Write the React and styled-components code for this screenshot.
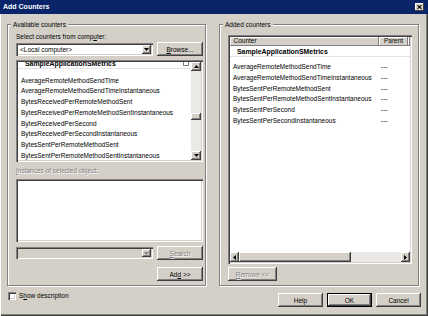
import React from 'react';
import styled, { createGlobalStyle, css } from 'styled-components';

const GlobalStyle = createGlobalStyle`
  html, body { margin: 0; padding: 0; background: #d4d0c8; }
  body { font-family: "Liberation Sans", Arial, sans-serif; font-size: 6.5px; color: #000; }
  * { box-sizing: border-box; }
`;

const raised = css`
  box-shadow: inset -1px -1px 0 #404040, inset 1px 1px 0 #ffffff,
    inset -2px -2px 0 #808080, inset 2px 2px 0 #d4d0c8;
`;
const raisedThin = css`
  box-shadow: inset -1px -1px 0 #404040, inset 1px 1px 0 #ffffff;
`;
const sunken = css`
  box-shadow: inset 1px 1px 0 #808080, inset 2px 2px 0 #404040,
    inset -1px -1px 0 #ffffff, inset -2px -2px 0 #d4d0c8;
`;

const Window = styled.div`
  width: 428px;
  height: 316px;
  background: #d4d0c8;
  display: flex;
  flex-direction: column;
  overflow: hidden;
  box-shadow: inset 1px 0 0 #ffffff, inset -1px -1px 0 #404040, inset -2px -2px 0 #808080;
`;

const TitleBar = styled.div`
  height: 14px;
  flex: none;
  background: #0a246a;
  display: flex;
  align-items: center;
  justify-content: space-between;
  padding: 0 4px 0 3px;
`;

const Title = styled.span`
  color: #fff;
  font-weight: bold;
  font-size: 7px;
  line-height: 14px;
`;

const CloseButton = styled.div`
  width: 9px;
  height: 8px;
  background: #d4d0c8;
  ${raisedThin};
  display: flex;
  align-items: center;
  justify-content: center;
`;

const Body = styled.div`
  flex: 1;
  display: flex;
  flex-direction: column;
  padding: 6px 9px 0 7px;
`;

const Columns = styled.div`
  display: flex;
  gap: 13px;
`;

const Group = styled.fieldset`
  margin: 0;
  min-width: 0;
  width: ${(p) => p.$w}px;
  flex: none;
  border: 1px solid #808080;
  box-shadow: inset 1px 1px 0 #ffffff, 1px 1px 0 #ffffff;
  padding: 4px ${(p) => p.$pr}px 4px 8px;
  display: flex;
  flex-direction: column;
`;

const Legend = styled.legend`
  padding: 0 2px;
  margin-left: -5px;
  line-height: 9px;
  background: #d4d0c8;
`;

const Label = styled.div`
  line-height: 8px;
  height: 8px;
  margin-top: ${(p) => p.$mt || 0}px;
  color: ${(p) => (p.$disabled ? '#808080' : '#000')};
  text-shadow: ${(p) => (p.$disabled ? '0.7px 0.7px 0 #fff' : 'none')};
  white-space: nowrap;
`;

const Row = styled.div`
  display: flex;
  align-items: center;
  justify-content: ${(p) => p.$justify || 'space-between'};
  height: 14px;
  flex: none;
  margin-top: ${(p) => p.$mt || 0}px;
`;

const Combo = styled.div`
  width: 137px;
  height: ${(p) => p.$h}px;
  padding: 2px;
  ${sunken};
  background: ${(p) => (p.$disabled ? '#d4d0c8' : '#ffffff')};
  display: flex;
`;

const ComboText = styled.span`
  flex: 1;
  padding-left: 2px;
  display: flex;
  align-items: center;
  white-space: nowrap;
`;

const DropButton = styled.div`
  width: 9px;
  flex: none;
  background: #d4d0c8;
  ${raised};
  display: flex;
  align-items: center;
  justify-content: center;
`;

const Button = styled.div`
  width: ${(p) => p.$w}px;
  height: 14px;
  flex: none;
  background: #d4d0c8;
  ${raised};
  ${(p) =>
    p.$default &&
    css`
      box-shadow: inset 0 0 0 1px #000000, inset -2px -2px 0 #404040, inset 2px 2px 0 #ffffff,
        inset -3px -3px 0 #808080;
    `};
  display: flex;
  align-items: center;
  justify-content: center;
  color: ${(p) => (p.$disabled ? '#808080' : '#000')};
  text-shadow: ${(p) => (p.$disabled ? '0.7px 0.7px 0 #fff' : 'none')};
  white-space: pre;
`;

const ListBox = styled.div`
  height: ${(p) => p.$h}px;
  flex: none;
  margin-top: ${(p) => p.$mt || 0}px;
  background: #ffffff;
  padding: 2px;
  ${sunken};
  display: flex;
  flex-direction: ${(p) => (p.$column ? 'column' : 'row')};
`;

const Viewport = styled.div`
  flex: 1;
  min-width: 0;
  min-height: 0;
  overflow: hidden;
`;

const ListContent = styled.div`
  margin-top: ${(p) => p.$offset || 0}px;
`;

const GroupHeader = styled.div`
  height: 11px;
  line-height: 11px;
  font-weight: bold;
  font-size: 6.9px;
  padding-left: 7px;
  padding-right: 2px;
  border-bottom: 1px solid #e2e2e2;
  margin-bottom: ${(p) => p.$gap}px;
  display: flex;
  align-items: center;
  justify-content: space-between;
  white-space: nowrap;
`;

const CollapseBox = styled.span`
  width: 6px;
  height: 6px;
  border: 1px solid #808080;
  background: #fff;
  flex: none;
`;

const Item = styled.div`
  height: 10.8px;
  line-height: 10.8px;
  padding-left: 3px;
  white-space: nowrap;
`;

const GridRow = styled.div`
  display: grid;
  grid-template-columns: 149px 1fr;
  height: 10.8px;
  line-height: 10.8px;
  white-space: nowrap;
`;

const Cell = styled.span`
  padding-left: ${(p) => p.$pl}px;
`;

const ColumnHeader = styled.div`
  display: flex;
  height: 9px;
  flex: none;
`;

const HeaderCell = styled.div`
  width: ${(p) => (p.$w ? `${p.$w}px` : 'auto')};
  flex: ${(p) => (p.$w ? 'none' : 1)};
  background: #d4d0c8;
  box-shadow: inset -1px -1px 0 #808080, inset 1px 1px 0 #ffffff;
  padding-left: ${(p) => p.$pl || 0}px;
  line-height: 8.5px;
  white-space: nowrap;
  overflow: hidden;
`;

const VScroll = styled.div`
  width: 10px;
  flex: none;
  display: flex;
  flex-direction: column;
  background: #ebe9e5;
`;

const HScroll = styled.div`
  height: 10px;
  flex: none;
  display: flex;
  background: #ebe9e5;
`;

const ScrollButton = styled.div`
  width: ${(p) => p.$w}px;
  height: ${(p) => p.$h}px;
  flex: none;
  background: #d4d0c8;
  ${raised};
  display: flex;
  align-items: center;
  justify-content: center;
  margin-top: ${(p) => (p.$end && p.$vertical ? 'auto' : 0)};
  margin-left: ${(p) => (p.$end && !p.$vertical ? 'auto' : 0)};
`;

const Thumb = styled.div`
  flex: none;
  background: #d4d0c8;
  ${raised};
  width: ${(p) => p.$w}px;
  height: ${(p) => p.$h}px;
  margin-top: ${(p) => p.$mt || 0}px;
`;

const Footer = styled.div`
  display: flex;
  align-items: flex-start;
  margin-top: 7px;
`;

const CheckLabel = styled.label`
  display: flex;
  align-items: center;
  gap: 3px;
  margin-top: -1px;
  margin-left: 1px;
  line-height: 8px;
  white-space: nowrap;
`;

const CheckBox = styled.span`
  width: 8px;
  height: 8px;
  background: #fff;
  ${sunken};
`;

const FooterButtons = styled.div`
  margin-left: auto;
  margin-right: -2px;
  display: flex;
  gap: 4px;
`;

const Arrow = ({ dir, color = '#000' }) => {
  const pts = {
    up: '0,3 2.5,0 5,3',
    down: '0,0 5,0 2.5,3',
    left: '3,0 3,5 0,2.5',
    right: '0,0 0,5 3,2.5',
  }[dir];
  const vertical = dir === 'up' || dir === 'down';
  return (
    <svg width={vertical ? 5 : 3} height={vertical ? 3 : 5} viewBox={vertical ? '0 0 5 3' : '0 0 3 5'}>
      <polygon points={pts} fill={color} />
    </svg>
  );
};

const leftItems = [
  'AverageRemoteMethodSendTime',
  'AverageRemoteMethodSendTimeInstantaneous',
  'BytesReceivedPerRemoteMethodSent',
  'BytesReceivedPerRemoteMethodSentInstantaneous',
  'BytesReceivedPerSecond',
  'BytesReceivedPerSecondInstantaneous',
  'BytesSentPerRemoteMethodSent',
  'BytesSentPerRemoteMethodSentInstantaneous',
];

const rightItems = [
  'AverageRemoteMethodSendTime',
  'AverageRemoteMethodSendTimeInstantaneous',
  'BytesSentPerRemoteMethodSent',
  'BytesSentPerRemoteMethodSentInstantaneous',
  'BytesSentPerSecond',
  'BytesSentPerSecondInstantaneous',
];

export default function App() {
  return (
    <>
      <GlobalStyle />
      <Window>
        <TitleBar>
          <Title>Add Counters</Title>
          <CloseButton>
            <svg width="5" height="4" viewBox="0 0 5 4">
              <path d="M0.5 0.2 L4.5 3.8 M4.5 0.2 L0.5 3.8" stroke="#000" strokeWidth="1.1" />
            </svg>
          </CloseButton>
        </TitleBar>
        <Body>
          <Columns>
            <Group $w={199} $pr={2}>
              <Legend>Available counters</Legend>
              <Label>
                Select counters from comp<u>u</u>ter:
              </Label>
              <Row $mt={1}>
                <Combo $h={13}>
                  <ComboText>&lt;Local computer&gt;</ComboText>
                  <DropButton>
                    <Arrow dir="down" />
                  </DropButton>
                </Combo>
                <Button $w={46}>
                  <span>
                    <u>B</u>rowse...
                  </span>
                </Button>
              </Row>
              <ListBox $h={102} $mt={4}>
                <Viewport>
                  <ListContent $offset={-4}>
                    <GroupHeader $gap={6.5}>
                      SampleApplicationSMetrics
                      <CollapseBox />
                    </GroupHeader>
                    {leftItems.map((t) => (
                      <Item key={t}>{t}</Item>
                    ))}
                  </ListContent>
                </Viewport>
                <VScroll>
                  <ScrollButton $w={10} $h={9}>
                    <Arrow dir="up" />
                  </ScrollButton>
                  <Thumb $w={10} $h={7} $mt={42} />
                  <ScrollButton $w={10} $h={9} $end $vertical>
                    <Arrow dir="down" />
                  </ScrollButton>
                </VScroll>
              </ListBox>
              <Label $mt={5} $disabled>
                <u>I</u>nstances of selected object:
              </Label>
              <ListBox $h={63} $mt={4} />
              <Row $mt={4}>
                <Combo $h={12} $disabled>
                  <ComboText />
                  <DropButton>
                    <Arrow dir="down" color="#808080" />
                  </DropButton>
                </Combo>
                <Button $w={46} $disabled>
                  <span>
                    <u>S</u>earch
                  </span>
                </Button>
              </Row>
              <Row $mt={7} $justify="flex-end">
                <Button $w={46}>
                  <span>
                    Ad<u>d</u>{' >>'}
                  </span>
                </Button>
              </Row>
            </Group>

            <Group $w={200} $pr={6}>
              <Legend>Added counters</Legend>
              <ListBox $h={229} $mt={2} $column>
                <ColumnHeader>
                  <HeaderCell $w={149} $pl={3.5}>
                    Counter
                  </HeaderCell>
                  <HeaderCell $w={29} $pl={5}>
                    Parent
                  </HeaderCell>
                  <HeaderCell />
                </ColumnHeader>
                <Viewport>
                  <GroupHeader $gap={5}>SampleApplicationSMetrics</GroupHeader>
                  {rightItems.map((t) => (
                    <GridRow key={t}>
                      <Cell $pl={3}>{t}</Cell>
                      <Cell $pl={2}>---</Cell>
                    </GridRow>
                  ))}
                </Viewport>
                <HScroll>
                  <ScrollButton $w={9} $h={10}>
                    <Arrow dir="left" />
                  </ScrollButton>
                  <Thumb $w={112} $h={10} />
                  <ScrollButton $w={9} $h={10} $end>
                    <Arrow dir="right" />
                  </ScrollButton>
                </HScroll>
              </ListBox>
              <Row $mt={3} $justify="flex-start">
                <Button $w={49} $disabled>
                  <span>
                    <u>R</u>emove {'<<'}
                  </span>
                </Button>
              </Row>
            </Group>
          </Columns>
          <Footer>
            <CheckLabel>
              <CheckBox />
              <span>
                S<u>h</u>ow description
              </span>
            </CheckLabel>
            <FooterButtons>
              <Button $w={45}>Help</Button>
              <Button $w={45} $default>
                OK
              </Button>
              <Button $w={45}>Cancel</Button>
            </FooterButtons>
          </Footer>
        </Body>
      </Window>
    </>
  );
}
